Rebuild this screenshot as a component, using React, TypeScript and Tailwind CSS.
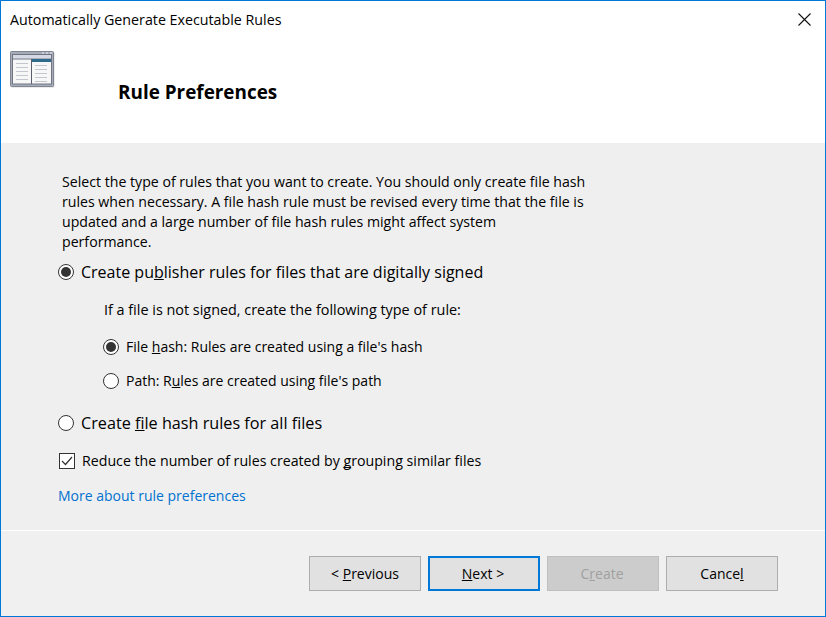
import type { ReactNode } from 'react'

function Radio({ checked }: { checked?: boolean }) {
  return (
    <span className="flex w-4 h-4 shrink-0 items-center justify-center rounded-full border-[1.5px] border-[#333] bg-white">
      {checked && <span className="w-2.5 h-2.5 rounded-full bg-[#333]" />}
    </span>
  )
}

function Key({ children }: { children: ReactNode }) {
  return <u className="[text-decoration-skip-ink:none]">{children}</u>
}

function Button({ children, variant }: { children: ReactNode; variant?: 'primary' | 'disabled' }) {
  const tone =
    variant === 'primary'
      ? 'border-2 border-[#0078d7] bg-[#e1e1e1] text-black pr-[2px]'
      : variant === 'disabled'
        ? 'border border-[#bfbfbf] bg-[#cccccc] text-[#a0a0a0] pr-[2px]'
        : 'border border-[#adadad] bg-[#e1e1e1] text-black'
  return (
    <button className={`w-[112px] h-[35px] flex items-center justify-center text-[14px] ${tone}`}>{children}</button>
  )
}

function LogoIcon() {
  return (
    <svg width="46" height="38" viewBox="0 0 46 38" className="block">
      <rect x="1.5" y="1.5" width="43" height="35" fill="#d9d9d9" />
      <rect x="0.5" y="0.5" width="43" height="35" rx="1" fill="#a6acba" stroke="#7f8591" />
      <rect x="2.5" y="3.5" width="39" height="29.5" fill="#f7f7f7" stroke="#6f7480" strokeWidth="1" />
      <rect x="3" y="4" width="38" height="3.5" fill="#d5d9e6" />
      <rect x="32" y="1.5" width="2" height="1" fill="#f2f2f2" />
      <rect x="36" y="1.5" width="2" height="1" fill="#f2f2f2" />
      <rect x="40" y="1.5" width="2" height="1" fill="#f2f2f2" />
      <rect x="3" y="7.5" width="38" height="1" fill="#6f7480" />
      <rect x="21" y="8" width="1" height="25" fill="#5a5f6b" />
      <rect x="22" y="8" width="19" height="3" fill="#2d6a8c" />
      {[12, 16, 20, 24, 28].map((y) => (
        <rect key={y} x="6" y={y} width="12" height="1" fill="#c4c7cf" />
      ))}
      {[14, 18, 22, 26, 30].map((y) => (
        <rect key={y} x="25" y={y} width="12" height="1" fill="#c4c7cf" />
      ))}
    </svg>
  )
}

export default function App() {
  return (
    <div
      className="w-[826px] h-[617px] flex flex-col border border-[#0078d7] bg-[#f0f0f0] text-black overflow-hidden"
      style={{ fontFamily: '"Open Sans", "Noto Sans", sans-serif' }}
    >
      <div className="h-[142px] shrink-0 bg-white flex flex-col">
        <div className="h-[37px] flex items-center justify-between pl-[9px] pr-[14px]">
          <span className="text-[14.25px] leading-none pt-[2px]">Automatically Generate Executable Rules</span>
          <svg width="13" height="13" viewBox="0 0 13 13" stroke="#111" strokeWidth="1.1" fill="none">
            <path d="M0.5 0.5 L12.5 12.5 M12.5 0.5 L0.5 12.5" />
          </svg>
        </div>
        <div className="flex pl-[9px] pt-[13px]">
          <LogoIcon />
          <h1 className="ml-[62px] mt-[29px] text-[18.9px] leading-6 font-bold whitespace-nowrap">Rule Preferences</h1>
        </div>
      </div>

      <div className="flex-1 flex flex-col pl-[57px] pt-[29px] text-[14px] bg-[#efefef]">
        <p className="leading-5 pl-1 whitespace-nowrap text-[14.15px]">
          Select the type of rules that you want to create. You should only create file hash
          <br />
          rules when necessary. A file hash rule must be revised every time that the file is
          <br />
          updated and a large number of file hash rules might affect system
          <br />
          performance.
        </p>

        <label className="mt-[10px] flex items-center gap-[7px] text-[16px] leading-5">
          <Radio checked />
          <span>
            Create pu<Key>b</Key>lisher rules for files that are digitally signed
          </span>
        </label>

        <p className="ml-[46px] mt-[18px] leading-5 text-[14.4px]">
          If a file is not signed, create the following type of rule:
        </p>

        <label className="ml-[45px] mt-[17px] flex items-center gap-[7px] leading-5">
          <Radio checked />
          <span>
            File <Key>h</Key>ash: Rules are created using a file's hash
          </span>
        </label>
        <label className="ml-[45px] mt-[14px] flex items-center gap-[7px] leading-5">
          <Radio />
          <span>
            Path: R<Key>u</Key>les are created using file's path
          </span>
        </label>

        <label className="mt-[22px] flex items-center gap-[7px] text-[16.2px] leading-5">
          <Radio />
          <span>
            Create <Key>f</Key>ile hash rules for all files
          </span>
        </label>

        <label className="mt-[18px] ml-px flex items-center gap-[7px] leading-5 text-[14.2px]">
          <span className="w-4 h-4 shrink-0 flex items-center justify-center border border-[#333] bg-white">
            <svg width="12" height="10" viewBox="0 0 12 10" fill="none" stroke="#333" strokeWidth="1.2">
              <path d="M1 5 L4.5 8.5 L11 1" />
            </svg>
          </span>
          <span>
            Reduce the number of rules created by <Key>g</Key>rouping similar files
          </span>
        </label>

        <a className="mt-[15px] leading-5 text-[#0072d0]">More about rule preferences</a>
      </div>

      <div className="h-[86px] shrink-0 border-t border-white flex items-start justify-end gap-[7px] pt-[25px] pr-[47px]">
        <Button>
          &lt;&nbsp;<Key>P</Key>revious
        </Button>
        <Button variant="primary">
          <Key>N</Key>ext &gt;
        </Button>
        <Button variant="disabled">
          C<Key>r</Key>eate
        </Button>
        <Button>
          Cance<Key>l</Key>
        </Button>
      </div>
    </div>
  )
}
